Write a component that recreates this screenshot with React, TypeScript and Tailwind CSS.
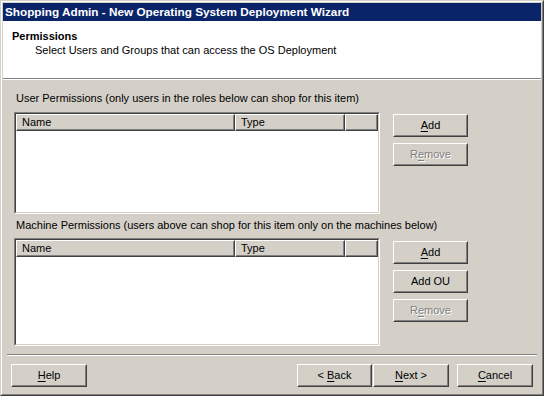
import React from 'react';

const font = { fontFamily: '"Liberation Sans", Arial, sans-serif' };

const Btn: React.FC<{ w?: string; disabled?: boolean; children: React.ReactNode }> = ({ w = 'w-[75px]', disabled, children }) => (
    <div className={`${w} h-[23px] border border-t-white border-l-white border-b-[#404040] border-r-[#404040]`}>
        <div className="h-full w-full border border-t-[#d4d0c8] border-l-[#d4d0c8] border-b-[#808080] border-r-[#808080] flex items-center justify-center">
            <span className={disabled ? 'text-[#808080] [text-shadow:1px_1px_0_#ffffff]' : 'text-black'}>{children}</span>
        </div>
    </div>
);

const HeaderCell: React.FC<{ w: string; children?: React.ReactNode }> = ({ w, children }) => (
    <div className={`${w} h-[17px] border border-t-white border-l-white border-b-[#404040] border-r-[#404040] shrink-0`}>
        <div className="h-full border-b border-r border-b-[#808080] border-r-[#808080] pl-[5px] leading-[14px]">{children}</div>
    </div>
);

const ListView: React.FC<{ h: string }> = ({ h }) => (
    <div className={`w-[366px] ${h} border border-t-[#808080] border-l-[#808080] border-b-white border-r-white`}>
        <div className="h-full border border-t-[#404040] border-l-[#404040] border-b-[#d4d0c8] border-r-[#d4d0c8] bg-white flex flex-col">
            <div className="flex bg-[#d4d0c8]">
                <HeaderCell w="w-[219px]">Name</HeaderCell>
                <HeaderCell w="w-[110px]">Type</HeaderCell>
                <HeaderCell w="flex-1" />
            </div>
        </div>
    </div>
);

const U: React.FC<{ children: React.ReactNode }> = ({ children }) => <span className="underline underline-offset-2">{children}</span>;

export default function App() {
    return (
        <div style={font} className="w-[544px] h-[396px] text-[11px] text-black border border-t-[#d4d0c8] border-l-[#d4d0c8] border-b-[#404040] border-r-[#404040]">
            <div className="h-full border border-t-white border-l-white border-b-[#808080] border-r-[#808080] bg-[#d4d0c8] p-px flex flex-col">
                <div className="h-[18px] bg-[#0a246a] text-white font-bold text-[11.75px] leading-[18px] pl-[2px]">
                    Shopping Admin - New Operating System Deployment Wizard
                </div>
                <div className="h-[57px] bg-white relative">
                    <div className="pt-[9px] pl-[9px] font-bold leading-[13px]">Permissions</div>
                    <div className="pl-[32px] pt-px leading-[13px]">Select Users and Groups that can access the OS Deployment</div>
                </div>
                <div className="h-px bg-[#808080]" />
                <div className="h-px bg-white" />
                <div className="flex-1 flex flex-col">
                    <div className="mt-[12px] pl-[13px] leading-[13px]">User Permissions (only users in the roles below can shop for this item)</div>
                    <div className="mt-[7px] flex pl-[11px]">
                        <ListView h="h-[102px]" />
                        <div className="ml-[13px] mt-[2px] flex flex-col gap-[6px]">
                            <Btn><U>A</U>dd</Btn>
                            <Btn disabled>R<U>e</U>move</Btn>
                        </div>
                    </div>
                    <div className="mt-[5px] pl-[13px] leading-[13px]">Machine Permissions (users above can shop for this item only on the machines below)</div>
                    <div className="mt-[6px] flex pl-[11px]">
                        <ListView h="h-[108px]" />
                        <div className="ml-[13px] mt-[3px] flex flex-col gap-[6px]">
                            <Btn><U>A</U>dd</Btn>
                            <Btn>Add OU</Btn>
                            <Btn disabled>R<U>e</U>move</Btn>
                        </div>
                    </div>
                    <div className="mt-[8px] ml-[4px] w-[530px] h-px bg-[#808080]" />
                    <div className="ml-[4px] w-[530px] h-px bg-white" />
                    <div className="mt-[8px] flex pl-[8px]">
                        <Btn w="w-[76px]"><U>H</U>elp</Btn>
                        <div className="ml-[210px] flex">
                            <Btn>&lt; <U>B</U>ack</Btn>
                            <div className="ml-px"><Btn w="w-[76px]"><U>N</U>ext &gt;</Btn></div>
                            <div className="ml-[8px]"><Btn w="w-[76px]"><U>C</U>ancel</Btn></div>
                        </div>
                    </div>
                </div>
            </div>
        </div>
    );
}
